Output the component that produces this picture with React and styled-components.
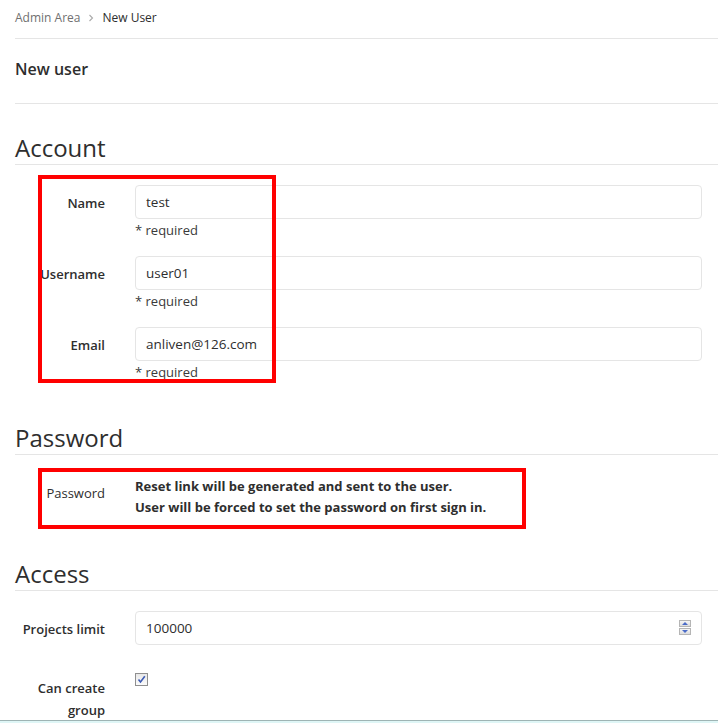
import React from 'react';
import styled, { createGlobalStyle } from 'styled-components';

const GlobalStyle = createGlobalStyle`
  html, body {
    margin: 0;
    padding: 0;
    background: #fff;
  }
  body {
    font-family: "Open Sans", "Noto Sans", sans-serif;
    color: #2e2e2e;
    font-size: 13px;
  }
`;

const Page = styled.div`
  padding-left: 15px;
  position: relative;
`;

const Breadcrumb = styled.div`
  display: flex;
  align-items: center;
  height: 35px;
  padding-bottom: 3px;
  border-bottom: 1px solid #e5e5e5;
  font-size: 12px;
  gap: 8px;
  color: #2e2e2e;

  .muted {
    color: #707070;
  }
  svg {
    color: #aaa;
  }
`;

const TitleBar = styled.div`
  padding: 19px 0 23px;
  border-bottom: 1px solid #e5e5e5;
  font-size: 16px;
  line-height: 22px;
  font-weight: 600;
`;

const Legend = styled.h3`
  margin: ${p => (p.$first ? '31px' : '27px')} 0 0;
  padding-bottom: 3px;
  border-bottom: 1px solid #e5e5e5;
  font-size: 24px;
  line-height: 26px;
  font-weight: 400;
  color: #2e2e2e;
`;

const Fields = styled.div`
  position: relative;
  display: flow-root;
  padding-top: 20px;
`;

const Group = styled.div`
  display: grid;
  grid-template-columns: 105px 1fr;
  column-gap: 15px;
  margin-top: ${p => p.$top || '0'};
  margin-bottom: 16px;
  padding-right: 16px;
`;

const Label = styled.label`
  text-align: right;
  padding: 8px 15px 0 0;
  font-weight: 600;
  font-size: 13px;
  line-height: ${p => (p.$tall ? '22px' : '20px')};
  color: #2e2e2e;
  ${p => p.$plain && 'font-weight: 400;'}
`;

const InputBox = styled.div`
  position: relative;
`;

const TextInput = styled.input`
  box-sizing: border-box;
  width: 100%;
  height: 34px;
  padding: 0 10px;
  border: 1px solid #e5e5e5;
  border-radius: 4px;
  font-family: "Open Sans", "Noto Sans", sans-serif;
  font-size: 13.5px;
  color: #2e2e2e;
  outline: none;
`;

const Help = styled.div`
  margin-top: 2px;
  line-height: 19px;
  font-size: 13px;
  color: #3a3a3a;
`;

const Notice = styled.div`
  padding-top: 1px;
  font-weight: 700;
  font-size: 13px;
  line-height: 21px;
  color: #2e2e2e;
`;

const Spinner = styled.div`
  position: absolute;
  right: 11px;
  top: 9px;
  display: flex;
  flex-direction: column;
  gap: 1px;
`;

const SpinButton = styled.div`
  width: 12px;
  height: 7px;
  box-sizing: border-box;
  border: 1px solid #b5b5b5;
  background: linear-gradient(#f6f6f6, #dcdcdc);
  display: flex;
  align-items: center;
  justify-content: center;
`;

const Check = styled.div`
  margin-top: 4px;
  width: 13px;
  height: 13px;
  box-sizing: border-box;
  border: 1px solid #8f8f8f;
  background: linear-gradient(#e8e8e8, #fbfbfb);
  display: flex;
  align-items: center;
  justify-content: center;
`;

const Marker = styled.div`
  position: absolute;
  border: 4px solid #ff0000;
  pointer-events: none;
  left: ${p => p.$left}px;
  top: ${p => p.$top}px;
  width: ${p => p.$width}px;
  height: ${p => p.$height}px;
  box-sizing: border-box;
`;

const BottomEdge = styled.div`
  position: fixed;
  left: 0;
  right: 0;
  bottom: 0;
  height: 2px;
  border-top: 1px solid #9fb4b4;
  background: #dff6f6;
`;

const Row = ({ label, value, help }) => (
  <Group>
    <Label>{label}</Label>
    <div>
      <TextInput defaultValue={value} />
      {help && <Help>* required</Help>}
    </div>
  </Group>
);

export default function App() {
  return (
    <>
      <GlobalStyle />
      <Page>
        <Breadcrumb>
          <span className="muted">Admin Area</span>
          <svg width="6" height="8" viewBox="0 0 6 8">
            <path d="M1.5 1 L4.5 4 L1.5 7" fill="none" stroke="currentColor" strokeWidth="1.1" />
          </svg>
          <span>New User</span>
        </Breadcrumb>
        <TitleBar>New user</TitleBar>

        <Legend $first>Account</Legend>
        <Fields>
          <Row label="Name" value="test" help />
          <Row label="Username" value="user01" help />
          <Row label="Email" value="anliven@126.com" help />
          <Marker $left={23} $top={10} $width={238} $height={208} />
        </Fields>

        <Legend>Password</Legend>
        <Fields>
          <Group>
            <Label $plain>Password</Label>
            <Notice>
              Reset link will be generated and sent to the user.
              <br />
              User will be forced to set the password on first sign in.
            </Notice>
          </Group>
          <Marker $left={23} $top={13} $width={488} $height={61} />
        </Fields>

        <Legend>Access</Legend>
        <Fields>
          <Group>
            <Label>Projects limit</Label>
            <InputBox>
              <TextInput defaultValue="100000" />
              <Spinner>
                <SpinButton>
                  <svg width="6" height="3" viewBox="0 0 6 3">
                    <path d="M0 3 L3 0 L6 3 Z" fill="#4a6bc7" />
                  </svg>
                </SpinButton>
                <SpinButton>
                  <svg width="6" height="3" viewBox="0 0 6 3">
                    <path d="M0 0 L3 3 L6 0 Z" fill="#4a6bc7" />
                  </svg>
                </SpinButton>
              </Spinner>
            </InputBox>
          </Group>
          <Group $top="24px">
            <Label $tall>Can create group</Label>
            <div>
              <Check>
                <svg width="9" height="9" viewBox="0 0 9 9">
                  <path d="M1.5 4.5 L3.5 7 L7.8 1.2" fill="none" stroke="#3c5bb5" strokeWidth="1.6" />
                </svg>
              </Check>
            </div>
          </Group>
        </Fields>
      </Page>
      <BottomEdge />
    </>
  );
}
